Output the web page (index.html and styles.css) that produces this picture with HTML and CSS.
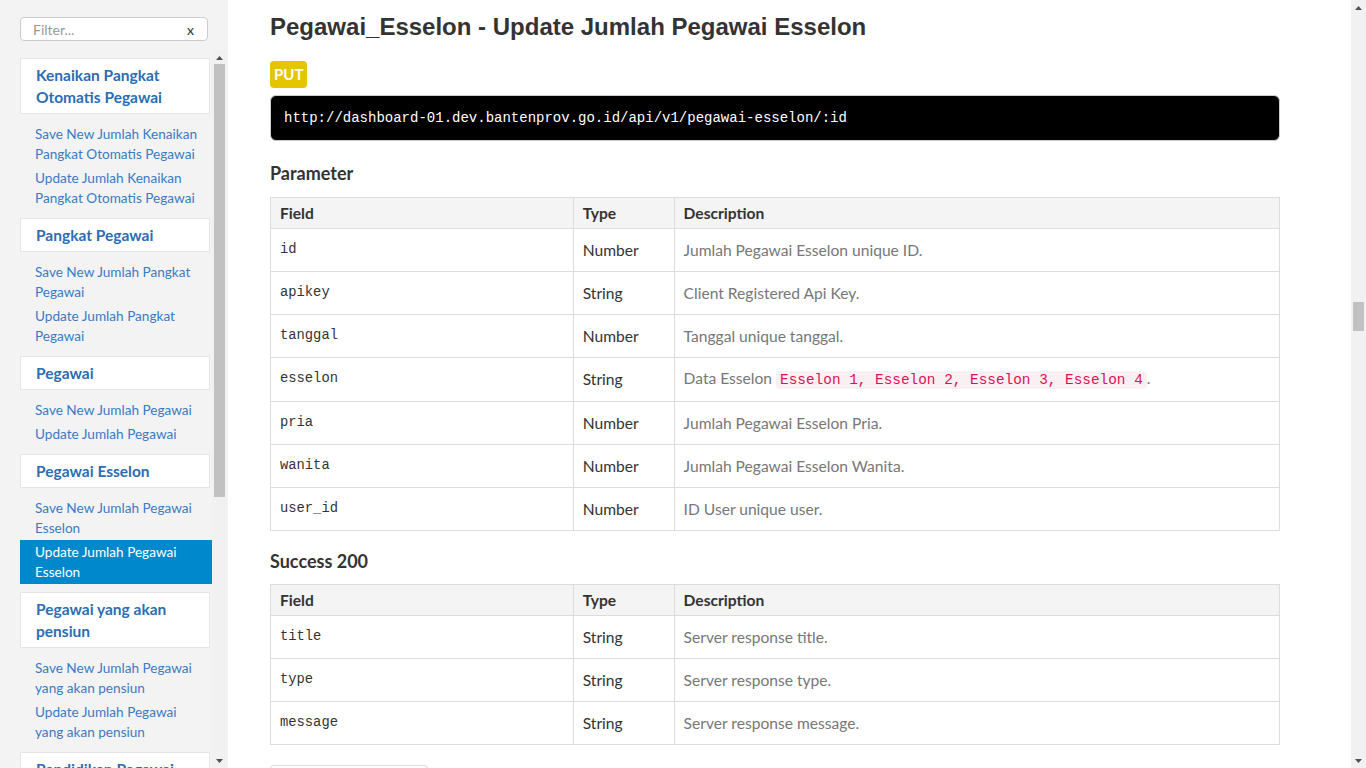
FILE: index.html
```html
<!DOCTYPE html>
<html lang="id">
<head>
<meta charset="utf-8">
<title>apiDoc - Pegawai_Esselon</title>
<link rel="stylesheet" href="styles.css">
</head>
<body>
<div class="layout">
  <aside class="sidebar">
    <div class="filter">
      <span class="filter-placeholder">Filter...</span>
      <span class="filter-clear">x</span>
    </div>
    <div class="sidenav-wrap">
      <nav class="sidenav">
        <ul class="nav-list">
          <li class="nav-header">Kenaikan Pangkat Otomatis Pegawai</li>
          <li class="nav-item">Save New Jumlah Kenaikan Pangkat Otomatis Pegawai</li>
          <li class="nav-item">Update Jumlah Kenaikan Pangkat Otomatis Pegawai</li>
          <li class="nav-header">Pangkat Pegawai</li>
          <li class="nav-item">Save New Jumlah Pangkat Pegawai</li>
          <li class="nav-item">Update Jumlah Pangkat Pegawai</li>
          <li class="nav-header">Pegawai</li>
          <li class="nav-item">Save New Jumlah Pegawai</li>
          <li class="nav-item">Update Jumlah Pegawai</li>
          <li class="nav-header">Pegawai Esselon</li>
          <li class="nav-item">Save New Jumlah Pegawai Esselon</li>
          <li class="nav-item active">Update Jumlah Pegawai Esselon</li>
          <li class="nav-header">Pegawai yang akan pensiun</li>
          <li class="nav-item">Save New Jumlah Pegawai yang akan pensiun</li>
          <li class="nav-item">Update Jumlah Pegawai yang akan pensiun</li>
          <li class="nav-header">Pendidikan Pegawai</li>
          <li class="nav-item">Save New Jumlah Pendidikan Pegawai</li>
          <li class="nav-item">Update Jumlah Pendidikan Pegawai</li>
        </ul>
      </nav>
      <div class="scrollbar">
        <div class="sb-btn"><svg width="7" height="4" viewBox="0 0 7 4"><path d="M0 4h7L3.5 0z" fill="#505050"/></svg></div>
        <div class="sb-track"><div class="sb-thumb sb-thumb-side"></div></div>
        <div class="sb-btn"><svg width="7" height="4" viewBox="0 0 7 4"><path d="M0 0h7L3.5 4z" fill="#505050"/></svg></div>
      </div>
    </div>
  </aside>

  <div class="main-wrap">
    <main class="content">
      <article class="article">
        <h1 class="title">Pegawai_Esselon - Update Jumlah Pegawai Esselon</h1>
        <div class="method"><span class="badge-put">PUT</span></div>
        <pre class="endpoint">http://dashboard-01.dev.bantenprov.go.id/api/v1/pegawai-esselon/:id</pre>

        <h2 class="section-title">Parameter</h2>
        <table class="fields">
          <thead>
            <tr><th class="col-field">Field</th><th class="col-type">Type</th><th class="col-desc">Description</th></tr>
          </thead>
          <tbody>
            <tr><td class="code">id</td><td>Number</td><td class="desc">Jumlah Pegawai Esselon unique ID.</td></tr>
            <tr><td class="code">apikey</td><td>String</td><td class="desc">Client Registered Api Key.</td></tr>
            <tr><td class="code">tanggal</td><td>Number</td><td class="desc">Tanggal unique tanggal.</td></tr>
            <tr><td class="code">esselon</td><td>String</td><td class="desc">Data Esselon <code class="inline-code">Esselon 1, Esselon 2, Esselon 3, Esselon 4</code>.</td></tr>
            <tr><td class="code">pria</td><td>Number</td><td class="desc">Jumlah Pegawai Esselon Pria.</td></tr>
            <tr><td class="code">wanita</td><td>Number</td><td class="desc">Jumlah Pegawai Esselon Wanita.</td></tr>
            <tr><td class="code">user_id</td><td>Number</td><td class="desc">ID User unique user.</td></tr>
          </tbody>
        </table>

        <h2 class="section-title section-title-next">Success 200</h2>
        <table class="fields">
          <thead>
            <tr><th class="col-field">Field</th><th class="col-type">Type</th><th class="col-desc">Description</th></tr>
          </thead>
          <tbody>
            <tr><td class="code">title</td><td>String</td><td class="desc">Server response title.</td></tr>
            <tr><td class="code">type</td><td>String</td><td class="desc">Server response type.</td></tr>
            <tr><td class="code">message</td><td>String</td><td class="desc">Server response message.</td></tr>
          </tbody>
        </table>

        <div class="tabs">
          <span class="tab">Success-Response:</span>
        </div>
        <pre class="example">HTTP/1.1 200 OK
{
  "title": "Success",
  "type": "success",
  "message": "Data updated successfully"
}</pre>
      </article>
    </main>
    <div class="scrollbar">
      <div class="sb-btn"><svg width="7" height="4" viewBox="0 0 7 4"><path d="M0 4h7L3.5 0z" fill="#505050"/></svg></div>
      <div class="sb-track"><div class="sb-thumb sb-thumb-main"></div></div>
      <div class="sb-btn"><svg width="7" height="4" viewBox="0 0 7 4"><path d="M0 0h7L3.5 4z" fill="#505050"/></svg></div>
    </div>
  </div>
</div>
</body>
</html>
```

FILE: styles.css
```css
* { box-sizing: border-box; }

html, body {
  margin: 0;
  padding: 0;
  height: 100%;
}

body {
  font-family: Lato, "Noto Sans", sans-serif;
  color: #333;
  background: #fff;
  overflow: hidden;
}

.layout {
  display: flex;
  height: 100vh;
}

/* ---------- Scrollbars (drawn) ---------- */
.scrollbar {
  width: 15px;
  flex: 0 0 15px;
  background: #f1f1f1;
  display: flex;
  flex-direction: column;
}

.sb-btn {
  height: 15px;
  flex: 0 0 15px;
  display: flex;
  align-items: center;
  justify-content: center;
}

.sb-btn svg { display: block; }

.sb-track {
  flex: 1 1 auto;
  padding: 0 2px;
}

.sb-thumb {
  background: #c1c1c1;
  width: 11px;
}

.sb-thumb-side {
  margin-top: -1px;
  height: 433px;
}

.sb-thumb-main {
  margin-top: 287px;
  height: 29px;
}

/* ---------- Sidebar ---------- */
.sidebar {
  width: 228px;
  flex: 0 0 228px;
  background: #f3f3f3;
  display: flex;
  flex-direction: column;
  padding: 17px 1px 0 20px;
}

.filter {
  width: 188px;
  height: 24px;
  border: 1px solid #ccc;
  border-radius: 4px;
  background: #fff;
  display: flex;
  align-items: center;
  justify-content: space-between;
  padding: 0 13px 0 12px;
  font-size: 14px;
  flex: 0 0 auto;
}

.filter-placeholder { color: #999; }
.filter-clear { color: #333; font-size: 14px; }

.sidenav-wrap {
  margin-top: 9px;
  flex: 1 1 auto;
  min-height: 0;
  display: flex;
}

.sidenav {
  flex: 1 1 auto;
  overflow: hidden;
}

.nav-list {
  list-style: none;
  margin: 0;
  padding: 0 0 8px 0;
}

.nav-header {
  margin: 8px 2px 8px 0;
  padding: 5px 8px 5px 15px;
  background: #fff;
  border: 1px solid #e5e5e5;
  color: #2c6db3;
  font-weight: 700;
  font-size: 15.5px;
  line-height: 22px;
}

.nav-item {
  padding: 2px 8px 2px 15px;
  font-size: 13.6px;
  line-height: 20px;
  color: #3a7bc4;
}

.nav-item.active {
  background: #0088cc;
  color: #fff;
}

/* ---------- Content ---------- */
.main-wrap {
  flex: 1 1 auto;
  display: flex;
  min-width: 0;
}

.content {
  flex: 1 1 auto;
  overflow: hidden;
  height: 100vh;
}

.article {
  width: 1010px;
  margin-left: 42px;
  padding: 13px 0 40px;
}

.title {
  margin: 0;
  font-family: "Liberation Sans", Arial, sans-serif;
  font-weight: 700;
  font-size: 24px;
  line-height: 28px;
  color: #333;
}

.method {
  margin-top: 20px;
  line-height: 0;
}

.badge-put {
  display: inline-block;
  background: #e5c500;
  color: #fff;
  font-weight: 700;
  font-size: 15px;
  line-height: 27px;
  height: 27px;
  padding: 0 4px;
  border-radius: 4px;
}

.endpoint {
  margin: 7px 0 0;
  background: #000;
  color: #fff;
  border: 1px solid #ccc;
  border-radius: 6px;
  padding: 13px 13px;
  font-family: "Liberation Mono", "DejaVu Sans Mono", monospace;
  font-size: 14px;
  line-height: 18px;
}

.section-title {
  margin: 20px 0 12px;
  font-size: 18px;
  line-height: 24px;
  font-weight: 700;
  color: #333;
}

.section-title-next {
  margin-top: 18px;
  margin-bottom: 11px;
}

.fields {
  width: 100%;
  border-collapse: collapse;
  table-layout: fixed;
  font-size: 15.6px;
}

.fields th,
.fields td {
  border: 1px solid #ddd;
  text-align: left;
  padding: 8px 9px;
}

.fields td {
  line-height: 25px;
  height: 43px;
}

.fields th {
  background: #f4f4f4;
  font-weight: 700;
  padding-top: 4px;
  padding-bottom: 4px;
  line-height: 22px;
}

.col-field { width: 30%; }
.col-type { width: 10%; }
.col-desc { width: 60%; }

.fields td.code {
  font-family: "Liberation Mono", "DejaVu Sans Mono", monospace;
  font-size: 13.8px;
  vertical-align: top;
}

.fields td.desc { color: #777; }

.inline-code {
  font-family: "Liberation Mono", "DejaVu Sans Mono", monospace;
  font-size: 14.4px;
  color: #dd1155;
  background: #f9f0f3;
  padding: 1px 4px;
  border-radius: 4px;
}

.tabs {
  margin-top: 20px;
  display: flex;
}

.tab {
  width: 158px;
  border: 1px solid #ddd;
  border-bottom: none;
  border-radius: 4px 4px 0 0;
  padding: 8px 12px;
  font-size: 15px;
  color: #555;
}

.example {
  margin: 0;
  border: 1px solid #ddd;
  padding: 12px;
  background: #000;
  color: #fff;
  font-family: "Liberation Mono", monospace;
  font-size: 13.8px;
}
```
